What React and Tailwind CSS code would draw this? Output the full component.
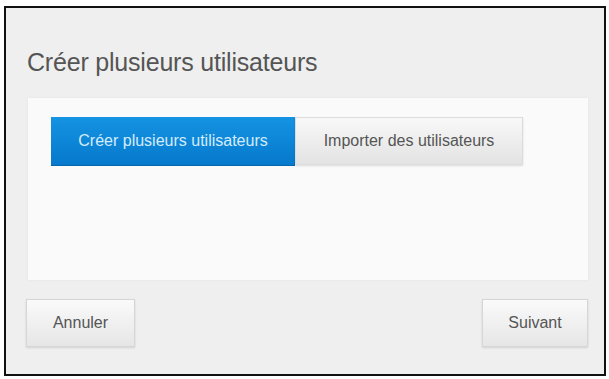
import React, { useState } from 'react'

const font = { fontFamily: '"Liberation Sans", Arial, sans-serif' }

const App = () => {
    const [tab, setTab] = useState('create')

    return (
        <div className="w-[609px] h-[379px] bg-white pl-[4px] pt-[6px] pr-[3px]" style={font}>
            <div className="h-[370px] border-2 border-[#111] bg-[#efefef] pl-[22px] pr-[16px] pt-[39px] flex flex-col">
                {/* Title */}
                <h1 className="h-[30px] leading-[30px] text-[25px] text-[#555] -ml-[1px] tracking-[-0.2px]">
                    Créer plusieurs utilisateurs
                </h1>

                {/* Panel */}
                <div className="mt-[21px] h-[182px] bg-[#fafafa] shadow-[0_0_2px_rgba(0,0,0,0.06)] pt-[19px] pl-[23px]">
                    <div className="flex">
                        <button
                            onClick={() => setTab('create')}
                            className={
                                tab === 'create'
                                    ? "w-[244px] h-[49px] text-[16px] bg-gradient-to-b from-[#1593e3] to-[#0679cc] text-[#d4ecfc] border-b border-[#0566ad]"
                                    : "w-[244px] h-[49px] text-[16px] bg-gradient-to-b from-[#f8f8f8] to-[#e4e4e4] text-[#555] border border-[#dcdcdc]"
                            }
                        >
                            Créer plusieurs utilisateurs
                        </button>
                        <button
                            onClick={() => setTab('import')}
                            className={
                                tab === 'import'
                                    ? "w-[228px] h-[49px] text-[16px] bg-gradient-to-b from-[#1593e3] to-[#0679cc] text-[#d4ecfc] border-b border-[#0566ad]"
                                    : "w-[228px] h-[48px] text-[16px] bg-gradient-to-b from-[#f8f8f8] to-[#e3e3e3] text-[#555] border border-[#dcdcdc] shadow-[0_1px_2px_rgba(0,0,0,0.12)]"
                            }
                        >
                            Importer des utilisateurs
                        </button>
                    </div>
                </div>

                {/* Footer */}
                <div className="mt-[19px] flex justify-between -ml-[2px]">
                    <button className="w-[109px] h-[48px] text-[16px] text-[#555] bg-gradient-to-b from-[#fafafa] to-[#e6e6e6] border border-[#d6d6d6] shadow-[0_1px_2px_rgba(0,0,0,0.12)]">
                        Annuler
                    </button>
                    <button className="w-[106px] h-[48px] text-[16px] text-[#555] bg-gradient-to-b from-[#fafafa] to-[#e6e6e6] border border-[#d6d6d6] shadow-[0_1px_2px_rgba(0,0,0,0.12)]">
                        Suivant
                    </button>
                </div>
            </div>
        </div>
    )
}

export default App
